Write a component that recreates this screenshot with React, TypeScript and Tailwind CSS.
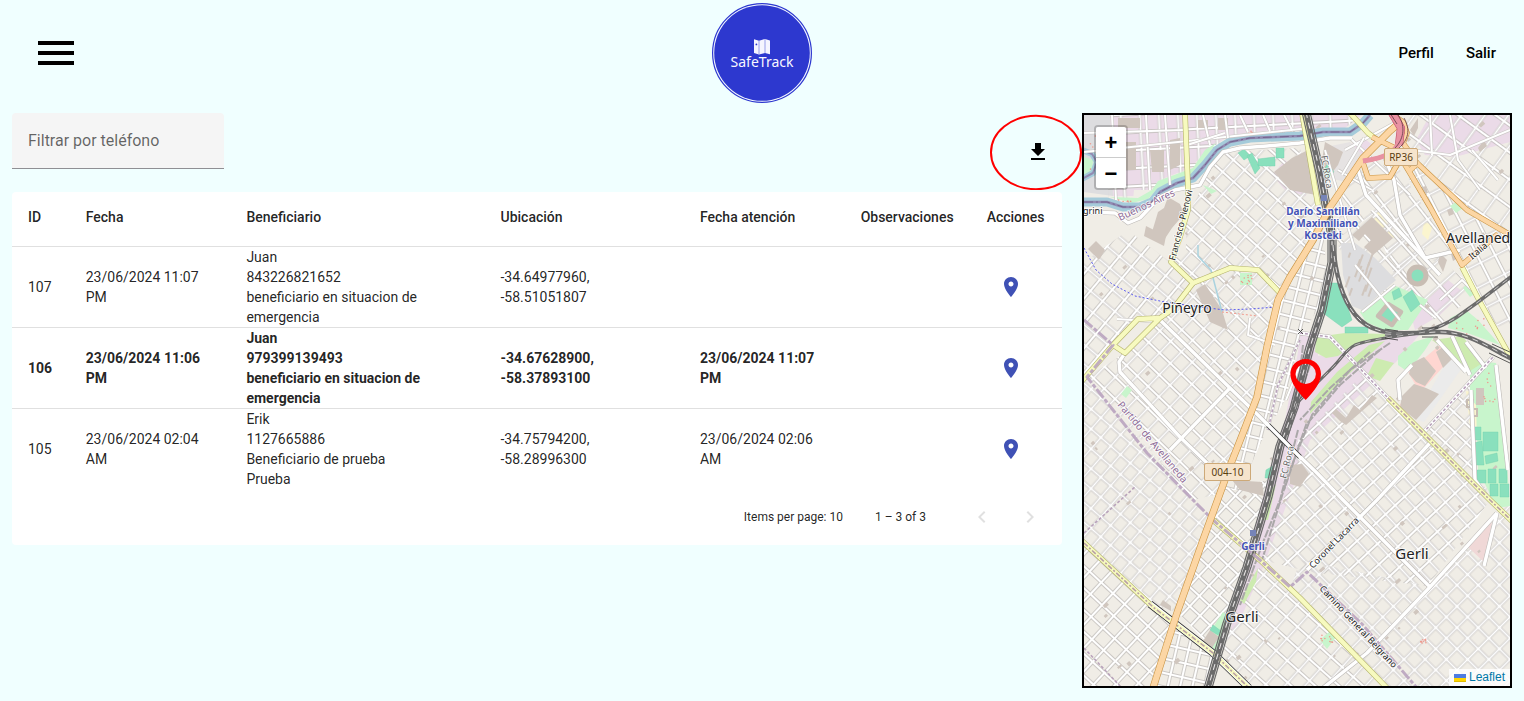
import type { ReactNode } from "react";

type Alert = {
  id: number;
  date: string;
  beneficiary: string[];
  location: string;
  attended: string;
  notes: string;
  bold?: boolean;
};

const alerts: Alert[] = [
  {
    id: 107,
    date: "23/06/2024 11:07 PM",
    beneficiary: ["Juan", "843226821652", "beneficiario en situacion de emergencia"],
    location: "-34.64977960, -58.51051807",
    attended: "",
    notes: "",
  },
  {
    id: 106,
    date: "23/06/2024 11:06 PM",
    beneficiary: ["Juan", "979399139493", "beneficiario en situacion de emergencia"],
    location: "-34.67628900, -58.37893100",
    attended: "23/06/2024 11:07 PM",
    notes: "",
    bold: true,
  },
  {
    id: 105,
    date: "23/06/2024 02:04 AM",
    beneficiary: ["Erik", "1127665886", "Beneficiario de prueba", "Prueba"],
    location: "-34.75794200, -58.28996300",
    attended: "23/06/2024 02:06 AM",
    notes: "",
  },
];

function Icon({ d, className }: { d: string; className: string }) {
  return (
    <svg viewBox="0 0 24 24" className={className} fill="currentColor" aria-hidden="true">
      <path d={d} />
    </svg>
  );
}

const ICONS = {
  menu: "M3 18h18v-2H3v2zm0-5h18v-2H3v2zm0-7v2h18V6H3z",
  download: "M19 9h-4V3H9v6H5l7 7 7-7zM5 18v2h14v-2H5z",
  place:
    "M12 2C8.13 2 5 5.13 5 9c0 5.25 7 13 7 13s7-7.75 7-13c0-3.87-3.13-7-7-7zm0 9.5c-1.38 0-2.5-1.12-2.5-2.5s1.12-2.5 2.5-2.5 2.5 1.12 2.5 2.5-1.12 2.5-2.5 2.5z",
  prev: "M15.41 7.41L14 6l-6 6 6 6 1.41-1.41L10.83 12z",
  next: "M10 6L8.59 7.41 13.17 12l-4.58 4.59L10 18l6-6z",
};

function Logo() {
  return (
    <svg viewBox="0 0 100 100" className="h-[100px] w-[100px]" role="img" aria-label="SafeTrack">
      <circle cx="50" cy="50" r="49.4" fill="#f4f7ff" stroke="#2d38cf" strokeWidth="1.2" />
      <circle cx="50" cy="50" r="47.8" fill="#2d38cf" />
      <path d="M42 36.200l5 1.600 6-1.900 5 1.600v13.800l-5-1.300-6 1.500-5-1.600z" fill="#f5f5ff" />
      <path d="M47 38v13.500M53 36v14" stroke="#8e95e6" strokeWidth=".9" />
      <circle cx="44.4" cy="41.4" r=".9" fill="#2d38cf" />
      <text x="50" y="64" textAnchor="middle" fontSize="14" fill="#f7f7ff" fontFamily="'Noto Sans', sans-serif">
        SafeTrack
      </text>
    </svg>
  );
}

/* ---------- Map drawing ---------- */

type GridArea = { id: string; angle: number; w: number; h: number; area: string };

const grids: GridArea[] = [
  { id: "g-north", angle: -3, w: 19, h: 18, area: "M1110 115H1362L1345 128L1300 132L1250 133L1226 140L1205 158L1190 174L1160 186L1140 203L1108 198Z" },
  { id: "g-pin-n", angle: 42, w: 15, h: 16, area: "M1210 170L1225 152L1300 148L1322 215L1282 290L1258 270L1230 266L1193 282L1172 262L1190 212Z" },
  { id: "g-pin-w", angle: 40, w: 16, h: 15, area: "M1084 262L1134 226L1146 240L1172 262L1193 284L1160 320L1138 319L1084 378Z" },
  { id: "g-pin-c", angle: 44, w: 15, h: 16, area: "M1160 320L1193 284L1230 268L1258 270L1278 296L1262 370L1218 494L1193 500L1087 377L1125 353Z" },
  { id: "g-strip", angle: 14, w: 12, h: 14, area: "M1284 290L1322 215L1328 290L1300 340L1285 400L1262 440L1240 490L1222 490L1262 370Z" },
  { id: "g-sw", angle: 41, w: 13, h: 15, area: "M1084 376L1193 500L1213 520L1178 612L1153 607L1084 543Z" },
  { id: "g-sw2", angle: 43, w: 16, h: 16, area: "M1084 543L1153 607L1175 625L1152 686H1084Z" },
  { id: "g-south", angle: 13, w: 12, h: 14, area: "M1172 622L1213 655L1205 686H1152Z" },
  { id: "g-mid", angle: 43, w: 14, h: 14, area: "M1222 490L1268 480L1247 567L1215 652L1178 612Z" },
  { id: "g-gerli-w", angle: 42, w: 15, h: 16, area: "M1262 562L1300 598L1385 686H1247L1215 654Z" },
  { id: "g-gerli-n", angle: 47, w: 16, h: 13, area: "M1298 440L1362 375L1388 398L1490 500L1428 586L1310 572L1262 560L1290 480Z" },
  { id: "g-gerli-e", angle: 45, w: 15, h: 15, area: "M1300 560L1428 586L1497 513L1510 520V686H1385L1290 590Z" },
  { id: "g-gerli-ne", angle: 43, w: 15, h: 14, area: "M1423 433L1470 385L1475 480L1510 505V520L1490 500Z" },
  { id: "g-ave-nw", angle: -38, w: 26, h: 19, area: "M1340 200L1364 160L1400 170L1462 266L1430 260L1400 290L1372 215L1336 240Z" },
  { id: "g-ave", angle: -27, w: 16, h: 21, area: "M1400 165L1417 163L1510 238V340L1484 310L1462 266Z" },
  { id: "g-ave-e", angle: 36, w: 19, h: 22, area: "M1400 115H1510V236L1467 210L1417 163L1405 150Z" },
  { id: "g-ave-s", angle: 48, w: 19, h: 22, area: "M1336 240L1372 210L1440 260L1478 290L1440 325L1400 290L1360 300Z" },
];

const north = "M1084 202L1107 202L1123 207H1140L1152 202L1160 192L1177 183L1193 178L1205 165L1217 150L1230 142L1250 138L1300 136L1323 132H1350L1363 123L1370 115";

const railMain = "M1306 112L1320 173L1332 237L1332 262L1322 310L1310 347L1294 408L1280 446L1268 497L1247 567L1227 623L1208 688";
const railEast = "M1333 245C1336 280 1344 305 1360 320C1378 336 1400 334 1437 332C1465 331 1485 345 1512 359";
const railNorthEast = "M1385 334C1420 336 1440 328 1457 317L1478 302L1512 276";
const railInner = "M1425 332C1395 337 1370 339 1355 345C1345 350 1341 360 1330 370L1297 403L1286 440";

const orangeRoads = [
  "M1397 125L1390 131L1363 158L1330 207L1313 240L1290 277L1278 300L1267 347L1257 397L1243 433L1230 466L1203 540L1177 613L1153 688",
  "M1362 160L1368 178L1390 177L1398 163",
  "M1372 137L1395 148L1410 173L1430 207L1462 265L1498 234",
  "M1393 115L1403 122L1407 133L1403 143L1417 163L1467 210L1512 236",
  "M1408 172L1419 162",
];

const yellowRoads = [
  "M1185 113L1188 187V210L1180 237L1171 262L1193 283L1230 268L1258 270L1280 293",
  "M1193 283L1173 309L1160 318L1125 353L1113 345L1138 319L1160 318",
  "M1113 345L1082 381",
  "M1350 113L1368 133L1376 139",
  "M1462 267L1480 302L1511 358",
  "M1388 398L1423 433L1490 500L1512 521",
  "M1082 541L1153 607L1213 653L1249 688",
  "M1213 520L1260 560L1300 598L1387 688",
  "M1302 113L1311 165L1318 205",
];

const mainStreets = [
  "M1160 320L1230 388L1260 417L1290 447L1317 473L1343 500L1360 517L1430 587",
  "M1125 353L1119 362L1120 372L1180 437L1207 463",
  "M1230 388L1170 450",
  "M1497 513L1430 587L1367 653L1323 688",
  "M1430 443L1377 500L1307 570",
  "M1084 212L1115 213L1128 223L1140 218L1160 197L1175 190L1200 185L1210 167L1223 152L1240 148L1267 146L1300 143L1330 138L1352 138",
  "M1300 333L1330 337L1388 398",
  "M1423 433L1493 357",
  "M1471 390L1475 480L1486 495",
  "M1496 365L1508 470",
  "M1497 513L1484 566",
  "M1385 158L1394 180L1400 215L1425 258L1460 250",
  "M1358 170L1366 195L1400 232L1440 275",
  "M1437 340L1466 372M1452 336L1470 375M1466 342L1486 368",
  "M1400 400L1398 380L1412 365",
];

const minorStreets = [
  "M1084 133L1184 130M1112 115L1116 200M1146 115L1150 190M1165 115L1170 185M1203 115L1210 145",
  "M1084 152L1310 128M1240 115L1248 132M1263 115L1270 131M1284 115L1292 130",
  "M1187 145L1225 133M1225 115L1228 138",
  "M1350 138L1410 195M1345 150L1400 120M1338 170L1372 190",
  "M1364 138L1342 175M1325 150L1355 250M1355 265L1400 320M1395 285L1362 312",
  "M1412 150L1450 155L1510 130M1430 115L1432 155M1450 115L1458 160L1480 190M1472 150L1498 180",
  "M1440 300L1462 280L1478 296M1420 305L1436 318",
  "M1300 340L1278 385L1268 430M1308 345L1286 400",
  "M1117 319L1160 322M1250 318L1248 335L1275 345",
];

const buildings = [
  "M1372 217L1393 238L1373 255L1364 247L1371 240L1365 234L1359 241L1352 235Z",
  "M1168 197L1180 204L1184 214L1172 228L1164 240L1152 232L1158 212L1164 208Z",
  "M1146 226L1166 236L1164 246L1144 236Z",
  "M1096 241L1105 250L1099 260L1088 249Z",
  "M1325 142L1343 152L1338 165L1328 178L1322 160Z",
  "M1292 158L1308 150L1316 195L1290 190L1274 172Z",
  "M1205 284L1222 310L1228 330L1210 322L1196 290Z",
  "M1120 142H1136V170H1120ZM1118 118H1140V128H1118ZM1150 150H1164V172H1152Z",
  "M1198 120H1208V128H1198ZM1218 118H1228V130H1218ZM1170 140L1180 138V165L1170 170Z",
  "M1412 363L1424 357L1436 371L1425 386L1416 382L1409 374Z",
  "M1436 352L1444 346L1453 358L1443 368Z",
  "M1402 396L1414 384L1426 388L1439 394L1416 420L1400 407Z",
  "M1332 413L1336 409L1346 418L1354 405L1360 410L1372 395L1377 398L1346 425L1340 421Z",
  "M1290 465L1302 464L1309 474L1300 487L1290 484Z",
  "M1232 480L1262 482L1264 496L1240 490Z",
  "M1210 630L1219 637L1212 648L1203 641Z",
  "M1163 600L1171 606V611L1160 605Z",
  "M1476 388H1484V405H1476Z",
  "M1440 253L1447 260L1443 272L1438 262ZM1453 244L1458 258L1453 261L1449 247Z",
  "M1447 210L1452 208L1454 214L1449 216ZM1418 188L1426 186L1428 193L1420 194Z",
  "M1410 130L1418 118V128L1414 136ZM1478 148L1484 140L1487 146L1480 152Z",
];

const pitches = [
  "M1330 283H1338L1347 305L1352 320L1342 327L1323 313Z",
  "M1238 153L1244 149L1250 156L1244 160ZM1247 156L1252 153L1260 168L1255 174ZM1258 159L1275 157V166H1258ZM1276 148H1284V158H1276Z",
  "M1392 292L1399 288L1402 296L1394 300ZM1403 297L1412 290L1420 304L1411 312Z",
  "M1345 327H1368V333H1345Z",
  "M1472 427H1481V440H1472ZM1483 432H1498V451H1483ZM1473 443L1482 441L1484 465H1472ZM1485 456L1497 453L1498 461L1486 464Z",
  "M1477 470H1486V483H1477ZM1488 469H1496V483H1488ZM1499 469H1507V483H1499ZM1490 484H1498V496H1490ZM1500 484H1509V497H1500Z",
  "M1213 625L1221 631L1218 635L1210 630Z",
  "M1266 470L1273 466L1271 478H1265Z",
  "M1328 163L1334 172L1328 178L1324 170Z",
];

const parks = [
  "M1110 197L1138 198L1152 190L1158 181L1193 168L1205 150L1216 143L1206 158L1194 174L1176 180L1158 188L1148 199L1132 203Z",
  "M1084 157L1093 160L1092 172L1084 176Z",
  "M1203 185L1217 191L1211 194Z",
  "M1240 273H1252V285H1240Z",
  "M1450 206L1456 202L1463 208L1456 213Z",
  "M1121 394L1127 386L1132 390L1126 398Z",
  "M1320 640L1329 632L1336 637L1327 649Z",
  "M1223 612L1230 618L1216 655L1202 644Z",
  "M1398 356L1414 342L1434 336L1425 350L1408 372L1398 365Z",
  "M1360 312L1396 286L1428 300L1408 330L1384 330L1366 322Z",
  "M1470 360L1496 363L1508 478L1510 506L1497 508L1478 470L1476 405L1470 398Z",
  "M1450 318L1466 310L1478 320L1500 345L1470 334L1448 328Z",
  "M1463 288L1470 281L1477 292L1470 297Z",
];

const meadows = [
  "M1316 337L1345 333L1388 334L1378 341L1352 346L1338 356L1326 358L1315 352Z",
  "M1311 402L1337 372L1369 345L1385 341L1366 358L1334 388L1310 414Z",
  "M1376 358L1394 363L1380 381L1367 376Z",
  "M1432 340L1462 336L1484 362L1470 371L1448 352Z",
  "M1270 490L1276 484L1268 520H1264ZM1240 600L1258 568L1256 582L1244 604Z",
];

const rnd = (n: number) => {
  const v = Math.sin(n * 127.1) * 43758.5453;
  return v - Math.floor(v);
};

function Band({ d, fill, casing, width }: { d: string; fill: string; casing: string; width: number }) {
  return (
    <>
      <path d={d} stroke={casing} strokeWidth={width + 1.2} />
      <path d={d} stroke={fill} strokeWidth={width} />
    </>
  );
}

function Rail({ d, width }: { d: string; width: number }) {
  return (
    <>
      <path d={d} stroke="#6b6b6b" strokeWidth={width} />
      <path d={d} stroke="#e9e6e6" strokeWidth={width / 5} strokeDasharray="6 5" />
    </>
  );
}

function Label({
  x,
  y,
  size,
  angle = 0,
  color = "#222",
  weight = 400,
  anchor = "middle",
  children,
}: {
  x: number;
  y: number;
  size: number;
  angle?: number;
  color?: string;
  weight?: number;
  anchor?: "start" | "middle";
  children: ReactNode;
}) {
  return (
    <text
      x={x}
      y={y}
      fontSize={size}
      fontWeight={weight}
      fill={color}
      stroke="#fff"
      strokeOpacity=".75"
      strokeWidth="2"
      strokeLinejoin="round"
      paintOrder="stroke"
      textAnchor={anchor}
      transform={`rotate(${angle} ${x} ${y})`}
    >
      {children}
    </text>
  );
}

function Shield({ x, y, w, children }: { x: number; y: number; w: number; children: string }) {
  return (
    <g>
      <rect x={x} y={y} width={w} height="17" rx="1.5" fill="#f6e4cc" stroke="#cda978" />
      <text x={x + w / 2} y={y + 12} fontSize="10" textAnchor="middle" fill="#5a3d10">
        {children}
      </text>
    </g>
  );
}

function MapDrawing() {
  return (
    <svg
      viewBox="1084 115 426 571"
      preserveAspectRatio="xMidYMid slice"
      className="block h-full w-full"
      fontFamily="'Noto Sans', sans-serif"
      role="img"
      aria-label="Mapa"
    >
      <defs>
        {grids.map((g) => (
          <pattern
            key={g.id}
            id={g.id}
            width={g.w}
            height={g.h}
            patternUnits="userSpaceOnUse"
            patternTransform={`translate(1160 320) rotate(${g.angle})`}
          >
            <path d={`M0 ${g.h / 2}H${g.w}M${g.w / 2} 0V${g.h}`} stroke="#bfbcb9" strokeWidth="3.4" />
            <path d={`M0 ${g.h / 2}H${g.w}M${g.w / 2} 0V${g.h}`} stroke="#fff" strokeWidth="2" />
          </pattern>
        ))}
      </defs>

      <rect x="1084" y="115" width="426" height="571" fill="#f0ede6" />

      <g fill="#ebdbe8">
        <path d="M1110 115H1362L1345 128L1300 131L1250 132L1226 138L1205 152L1190 168L1160 180L1140 196L1112 196Z" />
        <path d="M1430 115H1510V142L1455 157L1425 155L1416 140Z" />
        <path d="M1345 147L1364 138L1376 148L1360 166Z" />
        <path d="M1285 160L1300 175L1306 196L1285 190L1272 175Z" />
        <path d="M1411 315L1448 280L1463 292L1440 315L1415 330Z" />
        <path d="M1300 333L1318 335L1318 356L1345 350L1362 342L1420 334L1396 362L1310 440L1292 490L1262 570L1240 620L1228 640L1262 500L1285 420L1298 352Z" />
      </g>
      <g fill="#dddddf">
        <path d="M1084 115H1110L1113 196L1084 192Z" />
        <path d="M1326 147L1350 142L1362 155L1345 182L1330 178Z" fill="#e6e3e3" />
        <path d="M1450 356L1462 368L1424 422L1414 418Z" fill="#ebebeb" />
      </g>
      <path d="M1440 345L1452 357L1424 388L1409 416L1399 406L1415 384L1408 372Z" fill="#ffd6d1" />
      <path d="M1372 217L1378 211L1396 236L1393 238ZM1466 391L1477 393V426H1470ZM1424 222L1433 225L1428 240L1422 234Z" fill="#fbf5cf" />

      {grids.map((g) => (
        <path key={g.id} d={g.area} fill={`url(#${g.id})`} />
      ))}
      <path d="M1134 190L1186 190V250L1170 262L1130 232Z" fill="#f0ede6" />
      <path d="M1341 243L1355 243L1375 258L1396 280L1362 310L1352 306L1343 275Z" fill="#dddddf" />
      <path d="M1492 522L1485 563L1468 547Z" fill="#f0d8d7" />

      <g fill="#c8f5cc">{parks.map((d) => <path key={d} d={d} />)}</g>
      <g fill="#cdebb0">{meadows.map((d) => <path key={d} d={d} />)}</g>
      <g fill="#d0c6be">{buildings.map((d) => <path key={d} d={d} />)}</g>
      <g fill="#d0c6be">
        {Array.from({ length: 90 }, (_, i) => {
          const x = 1088 + rnd(i + 1) * 416;
          const y = 118 + rnd(i + 301) * 562;
          return (
            <rect
              key={i}
              x={x}
              y={y}
              width={2 + rnd(i + 77) * 4}
              height={2 + rnd(i + 177) * 2}
              transform={`rotate(-42 ${x} ${y})`}
            />
          );
        })}
        {Array.from({ length: 16 }, (_, i) => {
          const x = 1347 + rnd(i + 500) * 28;
          const y = 252 + rnd(i + 540) * 38;
          return <rect key={i} x={x} y={y} width="2" height={5 + rnd(i + 9) * 9} transform={`rotate(20 ${x} ${y})`} />;
        })}
      </g>
      <g fill="#8ae0bd" stroke="#6fcfab" strokeWidth=".4">
        {pitches.map((d) => (
          <path key={d} d={d} />
        ))}
      </g>
      <circle cx="1417.500" cy="275.500" r="8.500" fill="#8ae0bd" stroke="#c8bdb3" strokeWidth="5" />
      <path d="M1388 304L1401 312L1392 325L1378 316Z" fill="#8ae0bd" stroke="#c8bdb3" strokeWidth="4.500" strokeLinejoin="round" />
      <path d="M1467 400H1473V407H1467ZM1471 409H1477V416H1471Z" fill="none" stroke="#c8bdb3" strokeWidth="2" />
      <g fill="#ee9a8e">
        {Array.from({ length: 80 }, (_, i) => {
          const zones = [
            [1241, 274, 11, 10],
            [1321, 635, 12, 10],
            [1452, 318, 34, 18],
            [1484, 366, 13, 36],
            [1110, 200, 40, 2],
            [1240, 131, 55, 3],
            [1090, 120, 16, 70],
            [1420, 639, 6, 4],
          ];
          const z = zones[i % zones.length];
          return <circle key={i} cx={z[0] + rnd(i + 900) * z[2]} cy={z[1] + rnd(i + 990) * z[3]} r=".8" />;
        })}
      </g>

      <g fill="none" strokeLinejoin="round">
        <path d={north} stroke="#a5cbda" strokeWidth="9" />
        <path d="M1082 150L1092 154L1097 162L1093 173L1082 179" stroke="#a5cbda" strokeWidth="6" />
        <path d="M1198 245V256L1211 270L1222 312" stroke="#aad3df" strokeWidth="1.500" />
        <path d={north} stroke="#8d7ba8" strokeWidth="2.600" opacity=".8" />
        <path d={north} stroke="#75648f" strokeWidth="1" strokeDasharray="9 3 2 3" />
        <path d="M1082 150L1092 154L1097 162L1093 173L1082 179" stroke="#8d7ba8" strokeWidth="2" opacity=".8" />

        {minorStreets.map((d) => (
          <Band key={d} d={d} fill="#fff" casing="#c9c6c3" width={2} />
        ))}
        {mainStreets.map((d) => (
          <path key={d} d={d} stroke="#bdbab7" strokeWidth="4.600" />
        ))}
        {mainStreets.map((d) => (
          <path key={d} d={d} stroke="#fff" strokeWidth="3.400" />
        ))}
        <path
          d="M1300 333L1330 337L1388 398M1423 433L1493 357M1300 340L1278 385L1268 430M1084 648L1120 686M1084 533L1135 487"
          stroke="#b9a3bb"
          strokeWidth="1.600"
          strokeDasharray="3 2"
        />

        <g stroke="#aaa7a8" strokeWidth="2" strokeDasharray="8 1.500">
          <path d="M1390 343L1350 370L1312 415L1290 470L1262 560" />
          <path d="M1380 350L1340 385L1306 425L1284 490" />
          <path d="M1370 352L1330 388L1300 420" />
          <path d="M1303 345L1300 372L1290 415M1310 365L1300 395" />
          <path d="M1298 430L1280 500L1262 545L1240 605" />
        </g>

        {yellowRoads.map((d) => (
          <path key={d} d={d} stroke="#b5b46c" strokeWidth="5.600" />
        ))}
        <path d="M1150 604L1213 653L1249 688" stroke="#333" strokeWidth="7.500" />
        <path d="M1150 604L1213 653L1249 688" stroke="#fff" strokeWidth="6" />
        {yellowRoads.map((d) => (
          <path key={d} d={d} stroke="#f7fabf" strokeWidth="4.400" />
        ))}
        <path
          d="M1084 543L1153 607L1213 653L1249 688M1388 398L1423 433L1490 500L1512 521"
          stroke="#b89fa5"
          strokeWidth="1.600"
          strokeDasharray="5 2 2 2"
        />

        <Rail d={railMain} width={5.4} />
        <path d={railMain} stroke="#6b6b6b" strokeWidth="1.200" transform="translate(4 0)" />
        <path d={railMain} stroke="#6b6b6b" strokeWidth="1.200" transform="translate(-4 0)" />
        <Rail d={railEast} width={4.5} />
        <Rail d={railNorthEast} width={3.6} />
        <Rail d={railInner} width={3} />
        <path d="M1385 329L1398 331M1385 338L1398 340M1422 328L1438 328M1422 337L1438 337M1492 344L1512 353M1489 353L1512 364" stroke="#333" strokeWidth=".8" />

        <path
          d="M1084 320L1113 345L1087 377L1147 453L1193 500L1213 520L1260 560L1290 587L1307 572L1362 624L1417 688"
          stroke="#b9a3bf"
          strokeWidth="3"
          strokeDasharray="11 2 4 2"
          opacity=".9"
        />
        <path
          d="M1084 248L1096 270L1112 284L1135 296L1165 302L1200 307L1225 310L1250 309L1276 307"
          stroke="#5a5af0"
          strokeWidth="1"
          strokeDasharray="2 2"
        />
        <path d="M1222 312L1258 316" stroke="#f29a8e" strokeWidth="1" strokeDasharray="2 2" />

        {orangeRoads.map((d, i) => (
          <path key={d} d={d} stroke="#c99443" strokeWidth={i === 0 ? 7.2 : 5.6} />
        ))}
        {orangeRoads.map((d, i) => (
          <path key={d} d={d} stroke="#fcd6a4" strokeWidth={i === 0 ? 6 : 4.4} />
        ))}
        <Band d="M1392 113L1401 128L1399 145" fill="#e892a2" casing="#c24e6b" width={7} />
        <Band d="M1400 138C1398 152 1385 158 1363 161" fill="#e892a2" casing="#e892a2" width={4} />
        <path d="M1390 113L1397 124M1398 115C1405 124 1405 138 1395 148M1404 118C1411 130 1408 140 1399 148" stroke="#5f3a44" strokeWidth=".8" />
        <path d="M1268 425L1300 457" stroke="#333" strokeWidth="5" />
        <path d="M1266 423L1302 459" stroke="#fff" strokeWidth="3.600" />
        <path d="M1298 329L1303 334M1303 329L1298 334" stroke="#444" strokeWidth=".9" />
      </g>
      <rect x="1321" y="195" width="6" height="6" fill="#7684b8" />
      <rect x="1250" y="530" width="6" height="6" fill="#7684b8" />

      <Label x={1187} y={313} size={14}>Piñeyro</Label>
      <Label x={1446} y={243} size={14} anchor="start">Avellaneda</Label>
      <Label x={1412} y={559} size={15}>Gerli</Label>
      <Label x={1242} y={622} size={15}>Gerli</Label>
      <g>
        <Label x={1323} y={215} size={10} weight={700} color="#4453b5">Darío Santillán</Label>
        <Label x={1323} y={227} size={10} weight={700} color="#4453b5">y Maximiliano</Label>
        <Label x={1323} y={239} size={10} weight={700} color="#4453b5">Kosteki</Label>
        <Label x={1253} y={550} size={10} weight={700} color="#4453b5">Gerli</Label>
      </g>
      <Label x={1120} y={221} size={10} anchor="start" angle={-25} color="#8d6a96">Buenos Aires</Label>
      <Label x={1083} y={214} size={9} anchor="start">grini</Label>
      <Label x={1175} y={261} size={9} anchor="start" angle={-76}>Francisco Pienovi</Label>
      <Label x={1117} y={405} size={10} anchor="start" angle={50} color="#8d6a96">Partido de Avellaneda</Label>
      <Label x={1321} y={156} size={9} anchor="start" angle={80} color="#666">FC Roca</Label>
      <Label x={1286} y={479} size={9} anchor="start" angle={-76} color="#666">FC Roca</Label>
      <Label x={1313} y={569} size={9} anchor="start" angle={-46}>Coronel Lacarra</Label>
      <Label x={1319} y={589} size={9} anchor="start" angle={47}>Camino General Belgrano</Label>
      <Label x={1472} y={260} size={9} anchor="start" angle={-40}>Italia</Label>
      <Shield x={1384.5} y={148.5} w={33}>RP36</Shield>
      <Shield x={1204.5} y={463.5} w={46}>004-10</Shield>

      <path
        fillRule="evenodd"
        fill="#f00"
        d="M1305.700 359C1314.300 359 1321 365.600 1321 374C1321 383 1314 391 1305.700 400C1297.400 391 1290.400 383 1290.400 374C1290.400 365.600 1297 359 1305.700 359ZM1305.700 363.700A10.200 10.200 0 1 0 1305.700 384.100A10.200 10.200 0 1 0 1305.700 363.700Z"
      />
    </svg>
  );
}

function MapPanel() {
  return (
    <section aria-label="Mapa" className="relative h-[575px] w-[430px] shrink-0 overflow-hidden border-2 border-black bg-[#f0ede6]">
      <MapDrawing />
      <div className="absolute left-2.5 top-2.5 flex flex-col overflow-hidden rounded border-2 border-black/20 bg-clip-padding font-['Liberation_Sans',sans-serif] text-[22px] font-bold leading-8 text-black">
        <button type="button" aria-label="Zoom in" className="h-[31px] w-[30px] border-b border-[#ccc] bg-white">
          +
        </button>
        <button type="button" aria-label="Zoom out" className="h-[30px] w-[30px] bg-white">
          −
        </button>
      </div>
      <a
        href="#leaflet"
        className="absolute bottom-0 right-0 flex items-center gap-[3px] bg-white/80 px-[5px] font-['Liberation_Sans',sans-serif] text-xs leading-[17px] text-[#0078a8]"
      >
        <svg viewBox="0 0 12 8" className="h-2 w-3" aria-hidden="true">
          <path fill="#4c7be1" d="M0 0h12v4H0z" />
          <path fill="#ffd500" d="M0 4h12v3H0z" />
          <path fill="#e0bc00" d="M0 7h12v1H0z" />
        </svg>
        Leaflet
      </a>
    </section>
  );
}

function AlertsTable() {
  return (
    <div className="rounded bg-white">
      <table className="w-full table-fixed border-separate border-spacing-0 text-left text-sm leading-5">
        <colgroup>
          <col className="w-[5.5%]" />
          <col className="w-[15.3%]" />
          <col className="w-[24.2%]" />
          <col className="w-[19%]" />
          <col className="w-[15.3%]" />
          <col className="w-[12%]" />
          <col className="w-[8.700%]" />
        </colgroup>
        <thead>
          <tr className="h-[55px]">
            {["ID", "Fecha", "Beneficiario", "Ubicación", "Fecha atención", "Observaciones", "Acciones"].map((h) => (
              <th key={h} scope="col" className="whitespace-nowrap border-b border-black/12 pb-1 pl-4 font-medium">
                {h}
              </th>
            ))}
          </tr>
        </thead>
        <tbody className="[&>tr:not(:last-child)>td]:border-b [&>tr:not(:last-child)>td]:border-black/12">
          {alerts.map((a) => (
            <tr key={a.id} className={`h-[81px] last:h-20 ${a.bold ? "font-bold" : ""}`}>
              <td className="pl-4">{a.id}</td>
              <td className="px-4">{a.date}</td>
              <td className="px-4">
                {a.beneficiary.map((line) => (
                  <div key={line}>{line}</div>
                ))}
              </td>
              <td className="px-4">{a.location}</td>
              <td className="px-4">{a.attended}</td>
              <td className="px-4">{a.notes}</td>
              <td className="pl-4">
                <button type="button" aria-label={`Ver ${a.id} en el mapa`} className="grid size-12 place-items-center text-[#3f51b5]">
                  <Icon d={ICONS.place} className="size-6" />
                </button>
              </td>
            </tr>
          ))}
        </tbody>
      </table>
      <div className="flex h-14 items-center justify-end pr-2 text-xs">
        <span className="mr-8">Items per page: 10</span>
        <span className="mr-8">1 – 3 of 3</span>
        <button type="button" disabled aria-label="Previous page" className="grid size-12 place-items-center text-black/12">
          <Icon d={ICONS.prev} className="size-6" />
        </button>
        <button type="button" disabled aria-label="Next page" className="grid size-12 place-items-center text-black/12">
          <Icon d={ICONS.next} className="size-6" />
        </button>
      </div>
    </div>
  );
}

export default function App() {
  return (
    <div className="min-h-screen bg-[#f0ffff] font-['Roboto',sans-serif] text-black/87">
      <header className="grid h-[106px] grid-cols-3 items-center px-7">
        <button type="button" aria-label="Menú" className="ml-1 size-12 text-black">
          <Icon d={ICONS.menu} className="size-12" />
        </button>
        <div className="justify-self-center">
          <Logo />
        </div>
        <nav className="flex gap-8 justify-self-end text-[15px] font-medium text-black">
          <a href="#perfil">Perfil</a>
          <a href="#salir">Salir</a>
        </nav>
      </header>

      <main className="flex items-start gap-5 px-3 pb-3 pt-[7px]">
        <div className="min-w-0 flex-1">
          <div className="flex h-[79px] items-start justify-between">
            <div className="relative">
              <input
                id="phone"
                type="text"
                placeholder=" "
                className="peer h-14 w-[212px] rounded-t border-b border-[#8f8f94] bg-[#f5f5f5] px-4 pt-4 text-base outline-none"
              />
              <label
                htmlFor="phone"
                className="pointer-events-none absolute left-4 top-4 text-base text-black/60 peer-focus:top-1 peer-focus:text-xs peer-[:not(:placeholder-shown)]:top-1 peer-[:not(:placeholder-shown)]:text-xs"
              >
                Filtrar por teléfono
              </label>
            </div>
            <div className="relative mt-[15px] size-12">
              <button type="button" aria-label="Descargar" className="grid size-12 place-items-center text-black">
                <Icon d={ICONS.download} className="size-6" />
              </button>
              <svg
                viewBox="0 0 92 76"
                className="pointer-events-none absolute -left-6 -top-[14px] h-[76px] w-[92px] max-w-none"
                aria-hidden="true"
              >
                <ellipse cx="46" cy="38.5" rx="45" ry="36.700" fill="none" stroke="#f00" strokeWidth="2" />
              </svg>
            </div>
          </div>
          <AlertsTable />
        </div>
        <MapPanel />
      </main>
    </div>
  );
}
